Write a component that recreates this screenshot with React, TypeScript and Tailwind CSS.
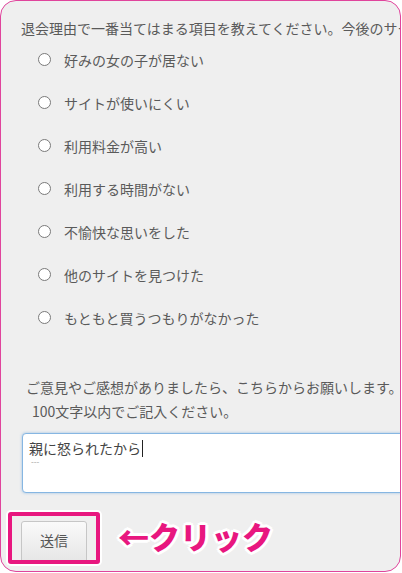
import React from "react";

const options = [
  "好みの女の子が居ない",
  "サイトが使いにくい",
  "利用料金が高い",
  "利用する時間がない",
  "不愉快な思いをした",
  "他のサイトを見つけた",
  "もともと買うつもりがなかった",
];

const jp = "font-['Noto_Sans_CJK_JP','Noto_Sans',sans-serif]";

export default function App() {
  return (
    <div className="w-[402px] h-[573px] bg-white overflow-hidden">
      <div
        className={`w-[401px] h-[572px] border-[1.5px] border-[#e0449c] rounded-[16px] bg-[#efefef] overflow-hidden flex flex-col ${jp} text-[#5a5a5a] text-[14px]`}
      >
        <div className="pt-[17px] pl-[20px] leading-[20px] whitespace-nowrap">
          退会理由で一番当てはまる項目を教えてください。今後のサービス向上に役立てます。
        </div>
        <div className="flex flex-col pl-[37px]">
          {options.map((o) => (
            <div key={o} className="h-[43px] flex items-center">
              <span className="w-[13px] h-[13px] rounded-full border border-[#7a7a7a] bg-white shrink-0" />
              <span className="ml-[13px] leading-[20px]">{o}</span>
            </div>
          ))}
        </div>
        <div className="mt-[36px] pl-[25px] leading-[24px] whitespace-nowrap">
          <div>ご意見やご感想がありましたら、こちらからお願いします。</div>
          <div className="pl-[6px]">100文字以内でご記入ください。</div>
        </div>
        <div className="mt-[10px] pl-[21px]">
          <div className="w-[400px] h-[60px] bg-white border border-[#86b6e2] rounded-[4px] shadow-[0_0_3px_rgba(100,160,220,0.6)] pl-[6px] pt-[4px]">
            <div className="flex items-center leading-[20px] text-[#444]">
              <span>親に怒られたから</span>
              <span className="w-px h-[17px] bg-[#222] ml-px" />
            </div>
            <div className="text-[8px] leading-[6px] text-[#999] pl-[2px] mt-[1px]">---</div>
          </div>
        </div>
        <div className="mt-[19px] pl-[7px] flex items-center">
          <div className="w-[92px] h-[52px] border-[4px] border-[#e8177f] rounded-[3px] shadow-[0_0_0_2px_#ffffff] pl-[9px] pt-[5px] flex overflow-hidden">
            <div className="w-[66px] h-[50px] bg-gradient-to-b from-[#fafafa] to-[#e2e2e2] border border-[#c6c6c6] rounded-[3px] flex justify-center pt-[8px] text-[#555] leading-[20px]">
              送信
            </div>
          </div>
          <div
            className={`ml-[18px] -mt-[4px] text-[31px] leading-[36px] font-black text-[#e8177f] tracking-[0px] [text-shadow:2px_0_0_#fff,-2px_0_0_#fff,0_2px_0_#fff,0_-2px_0_#fff,2px_2px_0_#fff,-2px_-2px_0_#fff,2px_-2px_0_#fff,-2px_2px_0_#fff,3px_0_0_#fff,-3px_0_0_#fff,0_3px_0_#fff,0_-3px_0_#fff]`}
          >
            ←クリック
          </div>
        </div>
      </div>
    </div>
  );
}
